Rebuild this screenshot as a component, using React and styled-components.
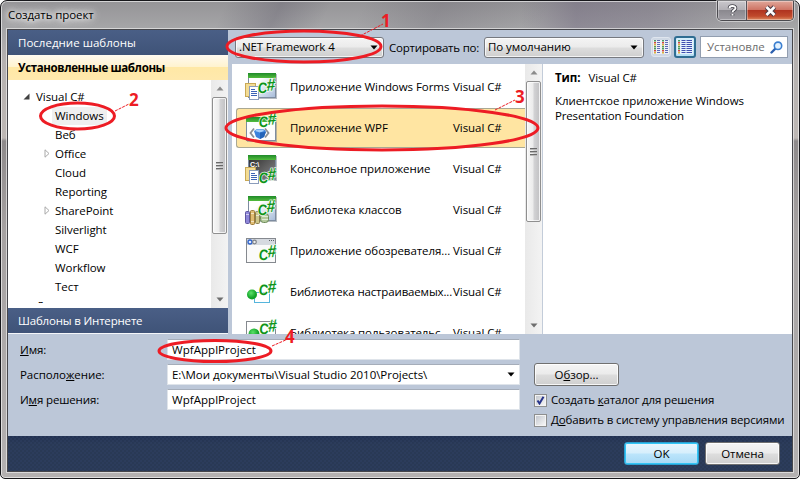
import React from 'react';
import styled, { createGlobalStyle, css } from 'styled-components';

const Global = createGlobalStyle`
  * { box-sizing: border-box; }
  html, body { margin: 0; background: #fff; overflow: hidden; }
  body {
    font: 11.5px/16px "Open Sans", "Noto Sans", sans-serif;
    letter-spacing: -0.06px;
    color: #000;
    white-space: nowrap;
  }
  u { text-underline-offset: 1px; text-decoration-thickness: 1px; }
`;

const Window = styled.div`
  position: relative;
  width: 800px;
  height: 479px;
  display: flex;
  flex-direction: column;
  border: 1px solid #17171b;
  border-radius: 7px 7px 5px 5px;
  padding: 0 6px 6px 5px;
  background:
    linear-gradient(90deg, transparent 0 520px, rgba(88, 75, 108, .3) 575px, rgba(88, 75, 108, .22) 650px, transparent 740px) 0 0 / 100% 29px no-repeat,
    linear-gradient(115deg, transparent 205px, rgba(70, 65, 85, .25) 255px, transparent 300px, transparent 330px, rgba(80, 75, 90, .2) 400px, transparent 500px) 0 0 / 100% 29px no-repeat,
    linear-gradient(180deg, #959497 0, #a6a6a8 28px, #b5b1b0 60px, #bdb7b4 137px, #8e8a8b 140px, #a6a2a2 230px, #b4b1b1 100%);
  box-shadow: inset 0 0 0 1px rgba(255, 255, 255, .6);
`;

const TitleBar = styled.header`
  flex: 0 0 28px;
  display: flex;
  align-items: flex-start;
  justify-content: space-between;
`;

const Title = styled.div`
  margin: 6px 0 0 2px;
  letter-spacing: -0.08px;
  text-shadow: 0 0 5px #fff, 0 0 8px #fff, 0 0 10px #fff, 0 0 14px rgba(255, 255, 255, .8);
`;

const Captions = styled.div`
  display: flex;
  width: 77px;
  height: 20px;
  margin-right: -1px;
  border: 1px solid #4b4a4f;
  border-top: 0;
  border-radius: 0 0 5px 5px;
  overflow: hidden;
  box-shadow: 0 0 0 1px rgba(255, 255, 255, .45);
`;

const Caption = styled.div`
  display: flex;
  align-items: center;
  justify-content: center;
  flex: ${p => (p.$close ? '1' : '0 0 29px')};
  border-right: ${p => (p.$close ? '0' : '1px solid #55535a')};
  background: ${p => (p.$close
    ? 'linear-gradient(180deg, #e0a79a 0, #cf7565 45%, #b03420 50%, #c04a2c 80%, #dd8b62 100%)'
    : 'linear-gradient(180deg, #c9c7cb 0, #b3b1b6 45%, #8b898f 50%, #a09ea4 100%)')};
  box-shadow: inset 0 0 0 1px rgba(255, 255, 255, .35);
`;

const Client = styled.main`
  flex: 0 0 443px;
  min-height: 0;
  width: 786px;
  margin-left: 1px;
  display: flex;
  flex-direction: column;
  border: 1px solid #46464b;
  box-shadow: 0 0 0 1px rgba(240, 240, 240, .65);
`;

const Templates = styled.section`
  display: flex;
  flex: 0 0 304px;
  height: 304px;
  background: #bcc7d8;
`;

const Sidebar = styled.nav`
  flex: 0 0 220px;
  display: flex;
  flex-direction: column;
  border-bottom: 1px solid #f4f6f9;
`;

const Section = styled.div`
  flex: 0 0 25px;
  padding: 5px 10px 4px;
  ${p => (p.$active
    ? css`
        color: #000;
        font-weight: 700;
        letter-spacing: -0.38px;
        background: linear-gradient(180deg, #fffaf0 0, #fff3d0 46%, #ffe8a6 50%, #ffe9ad 100%);
      `
    : css`
        color: #fff;
        letter-spacing: ${p.$ls || '0.02px'};
        background: linear-gradient(180deg, #4a5f86 0, #3f5378 100%);
      `)}
`;

const TreeArea = styled.div`
  flex: 1;
  min-height: 0;
  display: flex;
  background: #fff;
`;

const Tree = styled.div`
  flex: 1;
  height: 223px;
  padding-top: 7px;
  overflow: hidden;
`;

const Node = styled.div`
  display: flex;
  align-items: center;
  height: 19px;
  padding-left: ${p => (p.$child ? 34 : 12)}px;
`;

const Twist = styled.span`
  display: flex;
  justify-content: center;
  width: ${p => (p.$child ? 10 : 13)}px;
`;

const NodeLabel = styled.span`
  height: 18px;
  line-height: 17px;
  padding: 0 3px;
  background: ${p => (p.$selected ? '#efefef' : 'transparent')};
  letter-spacing: ${p => (p.$child ? '-0.05px' : '-0.06px')};
`;

const Bar = styled.div`
  flex: 0 0 17px;
  display: flex;
  flex-direction: column;
  align-items: center;
  background: linear-gradient(90deg, #e9e9e9, #f3f3f3);
`;

const BarEnd = styled.div`
  flex: 0 0 17px;
  display: flex;
  align-items: center;
`;

const Thumb = styled.div`
  flex: 0 0 ${p => p.$h}px;
  width: 15px;
  display: flex;
  flex-direction: column;
  align-items: center;
  justify-content: center;
  gap: 1px;
  border: 1px solid #8f8f8f;
  border-radius: 2px;
  background: linear-gradient(90deg, #f7f7f7 0, #ececec 45%, #d2d2d4 55%, #c4c4c6 90%, #dedede 100%);
  box-shadow: inset 0 0 0 1px rgba(255, 255, 255, .7);
`;

const Grip = styled.i`
  width: 7px;
  height: 2px;
  background: linear-gradient(180deg, #6a6a6a 50%, #b9b9b9 50%);
`;

const Spacer = styled.div`
  flex: 1;
`;

const Browser = styled.div`
  flex: 1;
  padding-left: 4px;
  display: flex;
  flex-direction: column;
`;

const Toolbar = styled.div`
  flex: 0 0 34px;
  display: flex;
  align-items: center;
  padding: 0 4px 0 3px;
`;

const Select = styled.div`
  display: flex;
  align-items: center;
  justify-content: space-between;
  flex: 0 0 ${p => p.$w}px;
  height: 21px;
  padding: 0 5px 0 3px;
  letter-spacing: ${p => p.$ls || '-0.06px'};
  border: 1px solid #76797f;
  border-radius: 3px;
  background: linear-gradient(180deg, #f4f4f4 0, #ebebeb 48%, #dddddd 52%, #cfcfcf 100%);
  box-shadow: inset 0 0 0 1px rgba(255, 255, 255, .75);
`;

const SortLabel = styled.label`
  width: 100px;
  padding: 2px 0 0 5px;
  letter-spacing: -0.2px;
`;

const ViewButton = styled.div`
  display: flex;
  align-items: center;
  justify-content: center;
  width: ${p => (p.$on ? 22 : 20)}px;
  height: ${p => (p.$on ? 22 : 20)}px;
  margin-left: ${p => (p.$on ? 3 : 7)}px;
  border: ${p => (p.$on ? '2px solid #2f6d92' : '1px solid #dfe5ee')};
  border-radius: 3px;
  background: ${p => (p.$on ? 'linear-gradient(180deg, #d6eefb, #b4dcf3)' : '#cfd8e4')};
`;

const Search = styled.div`
  display: flex;
  align-items: center;
  justify-content: space-between;
  width: 88px;
  height: 22px;
  margin-left: 4px;
  padding: 0 4px 0 6px;
  color: #6d6d6d;
  border: 1px solid #929eb0;
  background: #fff;
`;

const Panes = styled.div`
  flex: 0 0 270px;
  height: 270px;
  display: flex;
  overflow: hidden;
  background: #fff;
`;

const ListPane = styled.div`
  flex: 0 0 311px;
  display: flex;
  border-right: 1px solid #c3ccd9;
  overflow: hidden;
`;

const List = styled.div`
  flex: 1;
  min-width: 0;
  padding: 3px 0 0 4px;
`;

const Item = styled.div`
  display: flex;
  align-items: center;
  height: 40px;
  margin-bottom: 1px;
  padding-left: 8px;
  border: 1px solid ${p => (p.$selected ? '#aaa893' : 'transparent')};
  border-right: 0;
  border-radius: 3px 0 0 3px;
  background: ${p => (p.$selected ? '#ffe5a2' : 'transparent')};
`;

const ItemIcon = styled.svg`
  flex: 0 0 32px;
  height: 30px;
  overflow: visible;
`;

const ItemName = styled.div`
  width: 163px;
  margin-left: 13px;
  letter-spacing: ${p => p.$ls || '-0.06px'};
`;

const Details = styled.aside`
  flex: 1;
  padding: 6px 12px;
  line-height: 15px;
  letter-spacing: -0.08px;
`;

const TypeLine = styled.p`
  display: flex;
  gap: 8px;
  margin: 0 0 8px;
`;

const Blurb = styled.p`
  margin: 0;
  letter-spacing: ${p => p.$ls};
`;

const Form = styled.section`
  flex: 0 0 102px;
  display: flex;
  background: #bcc7d8;
`;

const Fields = styled.div`
  flex: 0 0 526px;
  display: flex;
  flex-direction: column;
  gap: 4px;
  padding: 5px 0 0 12px;
`;

const FieldRow = styled.div`
  display: flex;
  align-items: center;
  height: 21px;
`;

const FieldLabel = styled.label`
  width: 147px;
  letter-spacing: ${p => p.$ls || '-0.06px'};
`;

const Input = styled.div`
  display: flex;
  align-items: center;
  justify-content: space-between;
  width: 353px;
  height: 21px;
  padding: 0 4px;
  border: 1px solid #dfe4ea;
  border-top-color: #a5adb9;
  background: #fff;
  letter-spacing: ${p => p.$ls || '0.05px'};
`;

const Options = styled.div`
  flex: 1;
  padding-top: 29px;
`;

const Button = styled.button`
  display: block;
  width: ${p => p.$w}px;
  height: 23px;
  padding: 0;
  font: inherit;
  letter-spacing: inherit;
  color: #000;
  border: 1px solid #707070;
  border-radius: 3px;
  background: linear-gradient(180deg, #f4f4f4 0, #ebebeb 48%, #dddddd 52%, #cfcfcf 100%);
  box-shadow: inset 0 0 0 1px rgba(255, 255, 255, .8);
  ${p => p.$primary && css`
    border-color: #2a9fd0;
    background: linear-gradient(180deg, #eaf6fd 0, #d6effc 48%, #bce5fb 52%, #a7d9f5 100%);
    box-shadow: inset 0 0 0 1px #32c5f5;
  `}
`;

const Check = styled.label`
  display: flex;
  align-items: center;
  gap: 4px;
  height: 20px;
  margin-top: ${p => (p.$first ? 4 : 0)}px;
  letter-spacing: -0.15px;
`;

const Box = styled.span`
  display: flex;
  width: 13px;
  height: 13px;
  padding: 1px;
  border: 1px solid #8e8f8f;
  background: linear-gradient(135deg, #c4c8cf, #f6f6f6) content-box, #f4f4f4;
`;

const Footer = styled.footer`
  flex: 1;
  display: flex;
  justify-content: flex-end;
  gap: 6px;
  padding: 6px 12px 0 0;
  background:
    radial-gradient(circle at 1px 1px, #34456a 0 .5px, transparent .8px) 0 0 / 4px 4px,
    radial-gradient(circle at 1px 1px, #34456a 0 .5px, transparent .8px) 2px 2px / 4px 4px,
    linear-gradient(180deg, #223151 0, #293955 8px);
`;

const Marks = styled.svg`
  position: absolute;
  left: -1px;
  top: -1px;
  width: 800px;
  height: 479px;
  pointer-events: none;
  font: 700 17px "Open Sans", sans-serif;
  letter-spacing: 0;
`;

const Tri = styled.svg`
  display: block;
  width: 8px;
  height: 5px;
`;

const Chevron = ({ up, fill = '#000' }) => (
  <Tri viewBox="0 0 8 5"><path d={up ? 'M0.5 4.5 4 0.5 7.5 4.5Z' : 'M0.5 0.5h7L4 4.5Z'} fill={fill} /></Tri>
);

const ScrollBar = ({ thumb }) => (
  <Bar>
    <BarEnd><Chevron up fill="#8b8b8b" /></BarEnd>
    <Thumb $h={thumb}><Grip /><Grip /><Grip /></Thumb>
    <Spacer />
    <BarEnd><Chevron fill="#6e6e6e" /></BarEnd>
  </Bar>
);

const Sharp = ({ x, y }) => (
  <g transform={`translate(${x} ${y}) skewX(-5)`} fontFamily="Liberation Sans" fontWeight="700" fill="#0f941a" stroke="#f4fff4" strokeWidth="1.4" paintOrder="stroke" letterSpacing="0">
    <text transform="scale(.86 1)" x="-1" y="1" fontSize="15">C</text>
    <text transform="translate(8 -1) scale(.9 1) rotate(-4)" fontSize="17.500">#</text>
  </g>
);

const Frame = ({ x = 3, y = 1, w = 28, h = 25, body = 'url(#pane)' }) => (
  <g>
    <rect x={x + 1} y={y + 1} width={w} height={h} fill="#7b8794" opacity=".55" />
    <rect x={x + 0.5} y={y + 0.5} width={w - 1} height={h - 1} fill={body} stroke="#7d8ca0" />
    <rect x={x} y={y} width={w} height="5" fill="url(#green)" />
  </g>
);

const Docs = ({ y = 12 }) => (
  <g transform={`translate(0 ${y})`}>
    <rect x=".5" y=".5" width="10" height="13" fill="#f3dc94" stroke="#c9a955" />
    <rect x="4.5" y="3.5" width="9" height="13" fill="#fff" stroke="#8a9cbb" />
    <path d="M6 6.500h4M6 8.500h6M6 10.500h6M6 12.500h6" stroke="#3c63b5" />
  </g>
);

const icons = {
  forms: <><Frame /><Docs y={11} /><Sharp x={13.5} y={20} /></>,
  wpf: (
    <>
      <Frame x={1} y={4} w={30} h={24} body="#fdfdfd" />
      <path d="M9 15.500 5.500 20 9 24.500M20 15.500l3.500 4.500-3.500 4.500" fill="none" stroke="#8a8f96" strokeWidth="1.8" />
      <path d="M9 18l3-2h6l3 2-2 6-4 2-4-2Z" fill="#3b82dc" />
      <path d="M10 18l2-1.500h6l1 1.500-4 1.500Z" fill="#a5d0fb" />
      <path d="M15 19.500v6.500l4-2 2-5Z" fill="#2363b8" />
      <Sharp x={14.5} y={13} />
    </>
  ),
  console: (
    <>
      <Frame body="url(#dark)" />
      <text x="5" y="12.500" fontSize="7" fontWeight="700" fontFamily="Liberation Sans" fill="#fff">C:\</text>
      <Docs y={13} />
      <Sharp x={14.5} y={27.5} />
    </>
  ),
  library: (
    <>
      <Frame />
      <rect x=".5" y="16.500" width="4" height="12" rx="1" fill="#8d86d8" stroke="#5d559f" />
      <rect x="5.500" y="15.500" width="4" height="14" rx="1" fill="#e0bd72" stroke="#9e7d3a" />
      <rect x="10.500" y="16.500" width="4" height="12" rx="1" fill="#cfc78a" stroke="#8b8150" />
      <rect x="15.500" y="18.500" width="8" height="9" rx="3" fill="#b3c99b" stroke="#6d8a5a" />
      <path d="M1 19.500h3M6 18.500h3M6 26.500h3M11 20.500h3M17 21.500h6M17 24.500h6" stroke="#fff" opacity=".6" />
      <Sharp x={13.5} y={18.5} />
    </>
  ),
  browser: (
    <>
      <rect x="1.500" y="2.500" width="29" height="24" fill="#fafafa" stroke="#85898f" />
      <rect x="2" y="3" width="28" height="6" fill="#d6dae0" />
      <circle cx="5" cy="6" r="2" fill="#dfeaff" stroke="#2f62c9" strokeWidth="1.3" />
      <circle cx="9.500" cy="6" r="1.800" fill="#eee" stroke="#7c8087" strokeWidth="1.200" />
      <path d="M24 4.500h5" stroke="#5c6066" strokeDasharray="1 1" />
      <Sharp x={14.5} y={22.5} />
    </>
  ),
  custom: (
    <>
      <rect x="9.500" y="15.500" width="15" height="10" fill="#fff" stroke="#56b5dc" />
      <circle cx="7" cy="17.500" r="5" fill="url(#ball)" />
      <Sharp x={14.5} y={17} />
    </>
  ),
  user: (
    <>
      <rect x="1.500" y="3.500" width="29" height="25" fill="#fff" stroke="#85898f" />
      <circle cx="9" cy="16" r="5.500" fill="url(#ball)" />
      <Sharp x={15} y={15} />
    </>
  ),
};

const templates = [
  ['forms', 'Приложение Windows Forms'],
  ['wpf', 'Приложение WPF'],
  ['console', 'Консольное приложение'],
  ['library', 'Библиотека классов'],
  ['browser', 'Приложение обозревателя...'],
  ['custom', 'Библиотека настраиваемых...', '-0.16px'],
  ['user', 'Библиотека пользовательс...', '-0.1px'],
];

const nodes = [
  ['Windows'], ['Веб'], ['Office', true], ['Cloud'], ['Reporting'],
  ['SharePoint', true], ['Silverlight'], ['WCF'], ['Workflow'], ['Тест'],
];

const Gradients = () => (
  <defs>
    <linearGradient id="green" x1="0" y1="0" x2="0" y2="1">
      <stop offset="0" stopColor="#1f8a2a" /><stop offset="1" stopColor="#52bb3c" />
    </linearGradient>
    <linearGradient id="pane" x1="0" y1="0" x2="1" y2="1">
      <stop offset=".35" stopColor="#fff" /><stop offset="1" stopColor="#a5bbd9" />
    </linearGradient>
    <linearGradient id="dark" x1="0" y1="0" x2="1" y2="1">
      <stop offset="0" stopColor="#2a2a2a" /><stop offset="1" stopColor="#8a8a8a" />
    </linearGradient>
    <radialGradient id="ball" cx=".4" cy=".35">
      <stop offset="0" stopColor="#5be06a" /><stop offset="1" stopColor="#12a328" />
    </radialGradient>
  </defs>
);

const Columns = ({ wide }) => (
  <svg width="16" height="14" viewBox="0 0 16 14">
    <rect width="16" height="14" fill={wide ? '#e6f3fc' : '#eef1f6'} />
    {[1, 3, 5, 7, 9, 11, 13].map((y, i) => {
      const dot = ['#4c9a5b', '#d34a3d', '#d8b23c', '#5a9c50'][i % 4];
      return (
        <g key={y}>
          <rect x="1" y={y - 1} width="2" height="1.500" fill={dot} />
          {wide
            ? <path d={`M4.500 ${y - 0.5}h4M9.500 ${y - 0.5}h5.500`} stroke="#3f4fb0" />
            : (
              <>
                <path d={`M4 ${y - 0.5}h3M12 ${y - 0.5}h3`} stroke="#5f6bb8" />
                <rect x="9" y={y - 1} width="2" height="1.500" fill={dot} />
              </>
            )}
        </g>
      );
    })}
  </svg>
);

const Loupe = () => (
  <svg width="13" height="13" viewBox="0 0 13 13">
    <path d="M1.500 11.500 5.500 7.500" stroke="#2b5fae" strokeWidth="2.400" strokeLinecap="round" />
    <circle cx="8" cy="4.800" r="3.700" fill="#e3f2ff" stroke="#3b7fd0" strokeWidth="1.600" />
  </svg>
);

const HelpGlyph = () => (
  <svg width="11" height="13" viewBox="0 0 11 13" fill="none">
    <path d="M2.500 4.300C2.500 1.300 8.500 1.300 8.500 4.200 8.500 6 5.500 6 5.500 8.300M5.500 10v1.500" stroke="#45444c" strokeWidth="3.600" />
    <path d="M2.500 4.300C2.500 1.300 8.500 1.300 8.500 4.200 8.500 6 5.500 6 5.500 8.300M5.500 10v1.500" stroke="#fff" strokeWidth="1.900" />
  </svg>
);

const CloseGlyph = () => (
  <svg width="13" height="12" viewBox="0 0 13 12">
    <path d="M2.500 2 10.500 10M10.500 2 2.500 10" stroke="#4d3a44" strokeWidth="4.600" />
    <path d="M2.500 2 10.500 10M10.500 2 2.500 10" stroke="#fff" strokeWidth="2.600" />
  </svg>
);

export default function App() {
  return (
    <>
      <Global />
      <Window>
        <TitleBar>
          <Title>Создать проект</Title>
          <Captions>
            <Caption><HelpGlyph /></Caption>
            <Caption $close><CloseGlyph /></Caption>
          </Captions>
        </TitleBar>
        <Client>
          <Templates>
            <Sidebar>
              <Section>Последние шаблоны</Section>
              <Section $active>Установленные шаблоны</Section>
              <TreeArea>
                <Tree>
                  <Node>
                    <Twist><svg width="7" height="7"><path d="M6.500.5v6h-6Z" fill="#404040" /></svg></Twist>
                    <NodeLabel>Visual C#</NodeLabel>
                  </Node>
                  {nodes.map(([name, folder], i) => (
                    <Node key={name} $child>
                      <Twist $child>
                        {folder && <svg width="6" height="9"><path d="M1 .8v7.400L5 4.500Z" fill="#fff" stroke="#a9a9a9" /></svg>}
                      </Twist>
                      <NodeLabel $child $selected={i === 0}>{name}</NodeLabel>
                    </Node>
                  ))}
                  <Node><Twist /><NodeLabel>Другие языки</NodeLabel></Node>
                </Tree>
                <ScrollBar thumb={137} />
              </TreeArea>
              <Section $ls="-0.18px">Шаблоны в Интернете</Section>
            </Sidebar>
            <Browser>
              <Toolbar>
                <Select $w={149} $ls="-0.13px">.NET Framework 4<Chevron /></Select>
                <SortLabel>Сортировать по:</SortLabel>
                <Select $w={160}>По умолчанию<Chevron /></Select>
                <ViewButton><Columns /></ViewButton>
                <ViewButton $on><Columns wide /></ViewButton>
                <Search>Установле<Loupe /></Search>
              </Toolbar>
              <Panes>
                <ListPane>
                  <List>
                    {templates.map(([icon, name, ls], i) => (
                      <Item key={icon} $selected={i === 1}>
                        <ItemIcon viewBox="0 0 32 30"><Gradients />{icons[icon]}</ItemIcon>
                        <ItemName $ls={ls}>{name}</ItemName>
                        <span>Visual C#</span>
                      </Item>
                    ))}
                  </List>
                  <ScrollBar thumb={141} />
                </ListPane>
                <Details>
                  <TypeLine><b>Тип:</b><span>Visual C#</span></TypeLine>
                  <Blurb $ls="-0.06px">Клиентское приложение Windows</Blurb>
                  <Blurb $ls="-0.17px">Presentation Foundation</Blurb>
                </Details>
              </Panes>
            </Browser>
          </Templates>
          <Form>
            <Fields>
              <FieldRow>
                <FieldLabel><u>И</u>мя:</FieldLabel>
                <Input>WpfApplProject</Input>
              </FieldRow>
              <FieldRow>
                <FieldLabel>Располо<u>ж</u>ение:</FieldLabel>
                <Input $ls="-0.03px">E:\Мои документы\Visual Studio 2010\Projects\<Chevron /></Input>
              </FieldRow>
              <FieldRow>
                <FieldLabel $ls="-0.14px">И<u>м</u>я решения:</FieldLabel>
                <Input>WpfApplProject</Input>
              </FieldRow>
            </Fields>
            <Options>
              <Button $w={85}>О<u>б</u>зор...</Button>
              <Check $first>
                <Box>
                  <svg width="9" height="9" viewBox="0 0 9 9"><path d="M1.500 4.500 3.500 7.500 7.500 .8" fill="none" stroke="#27348b" strokeWidth="2" /></svg>
                </Box>
                <span>Создать <u>к</u>аталог для решения</span>
              </Check>
              <Check>
                <Box />
                <span>Д<u>о</u>бавить в систему управления версиями</span>
              </Check>
            </Options>
          </Form>
          <Footer>
            <Button $w={75} $primary>OK</Button>
            <Button $w={75}>Отмена</Button>
          </Footer>
        </Client>
        <Marks viewBox="0 0 800 479">
          <g fill="none" stroke="#ed1c24" strokeWidth="3">
            <ellipse cx="304" cy="46.500" rx="77" ry="15.500" />
            <ellipse cx="77.500" cy="116" rx="37" ry="13" />
            <ellipse cx="382" cy="128" rx="156" ry="22" />
            <ellipse cx="215" cy="351" rx="56" ry="10.500" />
          </g>
          <path d="M360 36 383 24M115 111 129 104M495 110 515 100M272 346 288 339" stroke="#ed1c24" strokeDasharray="3 1" />
          <g fill="#ed1c24">
            <text x="381" y="27">1</text>
            <text x="129" y="106">2</text>
            <text x="515" y="103">3</text>
            <text x="285" y="343">4</text>
          </g>
        </Marks>
      </Window>
    </>
  );
}
